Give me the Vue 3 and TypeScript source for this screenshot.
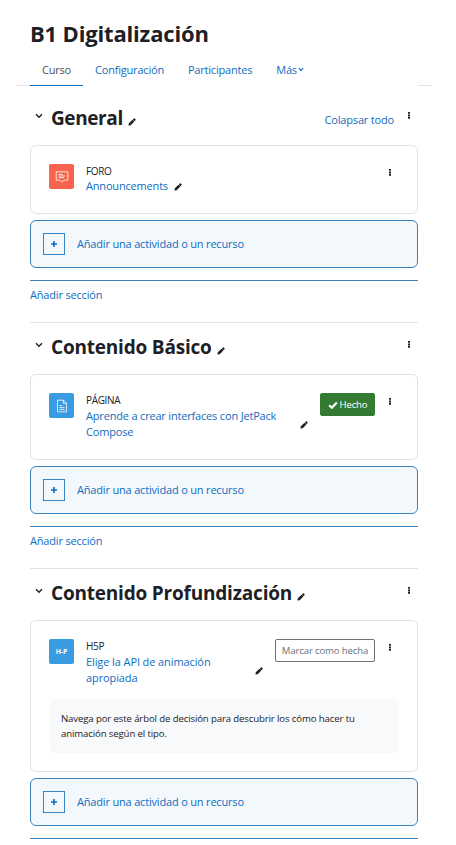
<script setup lang="ts">
import { computed, ref } from 'vue'

type Kind = 'forum' | 'page' | 'h5p'
interface Section {
  title: string
  kind: Kind
  label: string
  name: string
  status?: 'done' | 'todo'
  description?: string
}

const tabs = ['Curso', 'Configuración', 'Participantes']
const sections: Section[] = [
  { title: 'General', kind: 'forum', label: 'FORO', name: 'Announcements' },
  { title: 'Contenido Básico', kind: 'page', label: 'PÁGINA', name: 'Aprende a crear interfaces con JetPack Compose', status: 'done' },
  {
    title: 'Contenido Profundización',
    kind: 'h5p',
    label: 'H5P',
    name: 'Elige la API de animación apropiada',
    status: 'todo',
    description: 'Navega por este árbol de decisión para descubrir los cómo hacer tu animación según el tipo.',
  },
]
const active = ref('Curso')
const last = computed(() => sections.length - 1)
const pencil = 'M.4 7.6.8 5.3 4.5 1.7 6.4 3.6 2.7 7.2ZM4.8 1.4 5.8.5Q6.3.1 6.8.5L7.5 1.2Q7.9 1.7 7.5 2.2L6.6 3.2Z'
const dots = 'M1 0h2v1.8H1zM1 2.5h2v2H1zM1 4.9h2v1.9H1z'
</script>

<template>
  <main class="page">
    <h1><span>B1 Digitalización</span></h1>
    <nav class="tabs">
      <a v-for="tab in tabs" :key="tab" :class="{ active: tab === active }" @click="active = tab"><span>{{ tab }}</span></a>
      <a><span>Más</span><svg class="caret" viewBox="0 0 6 5"><path d="M.8 1.2 3 3.4 5.2 1.2" /></svg></a>
    </nav>

    <section v-for="(s, i) in sections" :key="s.title" class="section">
      <header class="head">
        <svg class="chevron" viewBox="0 0 8 6"><path d="M1 1.2 4 4.2 7 1.2" /></svg>
        <h2><span>{{ s.title }}</span></h2>
        <svg class="pencil" viewBox="0 0 8 8"><path :d="pencil" /></svg>
        <a v-if="i === 0" class="collapse"><span>Colapsar todo</span></a>
        <svg class="dots" viewBox="0 0 4 8"><path :d="dots" /></svg>
      </header>

      <article class="card" :class="s.kind">
        <div class="row">
          <div class="icon">
            <svg v-if="s.kind === 'forum'" viewBox="0 0 14 14"><path d="M1.2 1.8h11.6v8.4H9L7 12 5 10.2H1.2ZM3.5 4.4h4M3.5 6h7M3.5 7.7h5.5" /></svg>
            <svg v-else-if="s.kind === 'page'" viewBox="0 0 14 14"><path d="M2.5 1.2h6l3 3v8.6h-9ZM8.3 1.2v3.2h3.2M4.4 6.6h3M4.4 8.6h5.2M4.4 10.5h5.2" /></svg>
            <b v-else>H<i>-</i>P</b>
          </div>
          <div class="text">
            <div class="label">{{ s.label }}</div>
            <div class="name">
              <a>{{ s.name }}</a>
              <svg class="pencil" viewBox="0 0 8 8"><path :d="pencil" /></svg>
            </div>
          </div>
          <button v-if="s.status === 'done'" class="done"><svg viewBox="0 0 10 8"><path d="M1.2 4.2 3.8 6.7 8.9 1.4" /></svg><span>Hecho</span></button>
          <button v-else-if="s.status === 'todo'" class="todo"><span>Marcar como hecha</span></button>
          <svg class="dots" viewBox="0 0 4 8"><path :d="dots" /></svg>
        </div>
        <p v-if="s.description" class="description">{{ s.description }}</p>
      </article>

      <div class="add">
        <span class="plus"><svg viewBox="0 0 8 8"><path d="M4 1v6M1 4h6" /></svg></span>
        <span>Añadir una actividad o un recurso</span>
      </div>
      <div class="add-section"><a v-if="i < last">Añadir sección</a></div>
    </section>
  </main>
</template>

<style>
body { background: #fff; }
</style>

<style scoped>
* { box-sizing: border-box; }
.page { width: 456px; height: 845px; overflow: hidden; padding: 0 38px 0 30px; font: 11px/16px "Open Sans", "Noto Sans", sans-serif; letter-spacing: -0.18px; color: #1d2125; }
svg { display: block; flex: none; }
a { color: #0f6cbf; white-space: nowrap; }
h1, h2 { margin: 0; font-weight: 700; white-space: nowrap; }
h1 { height: 57px; padding-top: 17px; font-size: 22px; line-height: 32px; letter-spacing: -0.17px; }
.tabs { display: flex; height: 29px; position: relative; letter-spacing: -0.2px; }
.tabs::before, .tabs::after { content: ""; position: absolute; bottom: 0; height: 1px; width: 14px; background: #dee2e6; }
.tabs::before { left: -13px; width: 13px; }
.tabs::after { right: -14px; }
.tabs a { display: flex; padding: 5px 12px 0; border-bottom: 1px solid transparent; }
.tabs a.active { color: #495057; border-bottom-color: #0f6cbf; }
.caret { width: 6px; height: 5px; margin: 5px 0 0 1px; fill: none; stroke: #0f6cbf; stroke-width: 1.2; }
.section { height: 246px; }
.section:first-of-type { height: 236px; }
.section:last-of-type { height: auto; }
.section + .section { border-top: 1px solid #dee2e6; }
.head { display: flex; height: 51px; padding: 0 7px 0 5px; }
.section:first-of-type .head { height: 59px; padding-top: 8px; }
.chevron { width: 8px; height: 6px; margin-top: 19px; fill: none; stroke: #1d2125; stroke-width: 1.4; }
h2 { margin: 8px 0 0 8px; font-size: 19px; line-height: 32px; letter-spacing: -0.2px; }
.section:first-of-type h2 { letter-spacing: -0.4px; }
.pencil { width: 8px; height: 8px; fill: #1d2125; }
.head .pencil { margin: 24px 0 0 5px; }
.head .dots { margin: 18px 0 0 auto; }
.collapse { margin: 18px 0 0 auto; }
.head .collapse + .dots { margin-left: 13px; }
.dots { width: 4px; height: 8px; fill: #1d2125; }
.card { min-height: 69px; border: 1px solid #dee2e6; border-radius: 6px; padding: 18px; }
.card.page { height: 86px; width: auto; letter-spacing: -0.18px; }
.row { display: flex; }
.icon { width: 25px; height: 25px; border-radius: 2px; background: #399be2; display: grid; place-items: center; flex: none; }
.forum .icon { background: #f7634d; }
.icon svg { width: 14px; height: 14px; fill: none; stroke: #fff; stroke-width: .8; }
.icon b { font-size: 7px; line-height: 8px; color: #fff; display: flex; letter-spacing: -.2px; }
.icon i { font-style: normal; }
.text { min-width: 0; flex: 1; margin: 0 12px 0 12px; font-size: 11px; }
.label { font-size: 10px; height: 15px; line-height: 15px; letter-spacing: -0.35px; }
.name { display: flex; align-items: center; justify-content: space-between; gap: 6px; }
.name a { white-space: normal; }
.name .pencil { margin-top: 2px; }
.h5p .name { letter-spacing: -0.1px; }
.forum .name { justify-content: flex-start; margin-top: -1px; }
.forum .row { height: 31px; }
button { font: inherit; font-size: 9.6px; letter-spacing: -0.15px; height: 23px; border-radius: 2px; display: flex; align-items: center; justify-content: center; padding: 0; white-space: nowrap; flex: none; }
.done { width: 55px; background: #357a32; border: 1px solid #357a32; color: #fff; gap: 2px; }
.done svg { width: 10px; height: 8px; fill: none; stroke: #fff; stroke-width: 2.2; }
.todo { width: 100px; background: #fff; border: 1px solid #6a737b; color: #6a737b; }
.row > .dots { margin: 5px 7px 0 13px; }
.description { margin: 13px 0 0 1px; height: 54px; border-radius: 6px; background: #f8f9fa; padding: 12px 11px; font-size: 9.6px; letter-spacing: -0.12px; line-height: 15px; }
.add { margin-top: 6px; height: 48px; border: 1px solid #3a84c0; border-radius: 6px; background: #f3f8fc; display: flex; align-items: center; padding-left: 12px; color: #0f6cbf; }
.plus { width: 22px; height: 22px; border: 1px solid #3a84c0; display: grid; place-items: center; margin-right: 12px; }
.plus svg { width: 8px; height: 8px; stroke: #0f6cbf; stroke-width: 1.6; }
.add-section { margin-top: 12px; border-top: 1px solid #3a84c0; padding-top: 6px; }
</style>
